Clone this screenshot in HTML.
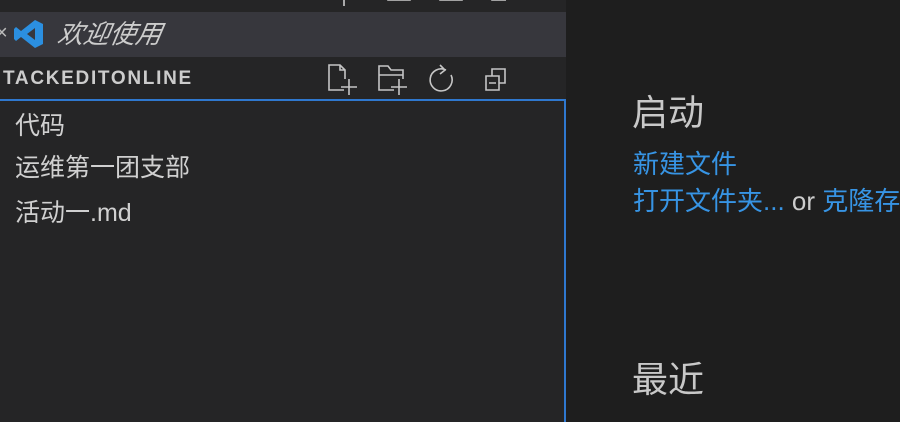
<!DOCTYPE html>
<html><head><meta charset="utf-8"><style>
body{margin:0;width:900px;height:422px;overflow:hidden;background:#1e1e1e;font-family:"Liberation Sans","Noto Sans CJK SC",sans-serif;position:relative}
.abs{position:absolute;white-space:nowrap}
.side{left:0;top:0;width:566px;height:422px;background:#252526}
.top{left:0;top:0;width:566px;height:12px;background:#252526}
.tab{left:0;top:12px;width:566px;height:45px;background:#37373d}
.list{left:-2px;top:99px;width:568px;height:323px;border:2px solid #2f78cf;box-sizing:border-box;border-bottom:none}
.item{position:absolute;left:15px;color:#d0d0d0;font-size:25px;line-height:30px;white-space:nowrap}
.clip{position:absolute;left:0;top:0;width:900px;height:422px;overflow:hidden}
svg{position:absolute}
</style></head><body>
<div class="clip">
<div class="abs side"></div>
<div class="abs top">
<svg style="left:328px;top:-8px" width="200" height="16" fill="none" stroke="#ccc" stroke-width="1.6"><path d="M2 0v6h20M16 0v14"/><path d="M60 2v6h22v-6"/><path d="M112 2v6h22v-6"/><path d="M164 2v6h14"/></svg>
</div>
<div class="abs tab">
<div class="abs" style="left:-4px;top:10px;color:#bbb;font-size:20px">×</div>
<svg style="left:13px;top:5px" width="32" height="34" viewBox="0 0 32 30"><path d="M22 1 L30 5 V25 L22 29 L8 18 L3 22 L1 20 V10 L3 8 L8 12 Z M22 9 L14 15 L22 21Z" fill="#2b8fe0" fill-rule="evenodd"/></svg>
<div class="abs" style="left:58px;top:7px;color:#ccc;font-size:26px;line-height:30px;font-style:italic;transform:skewX(-10deg)">欢迎使用</div>
</div>
<div class="abs" style="left:3px;top:68px;color:#ccc;font-size:19px;line-height:22px;font-weight:bold;letter-spacing:1.7px">TACKEDITONLINE</div>
<svg style="left:326px;top:62px" width="240" height="36" fill="none" stroke="#c5c5c5" stroke-width="1.6">
<path d="M18 28H3V3h11l5 5v9M14 3v5h5M15 25h16M23 17v16"/>
<path d="M68 28H53V4h9l3 4h12v9M53 13h24M65 25h16M73 17v16"/>
<path d="M120 8a11 11 0 1 0 5 5M114 3l5 5-5 4"/>
<path d="M160 14h13v14h-13zM166 14V7h13v14h-6M163 21h7"/>
</svg>
<div class="abs list"></div>
<div class="item" style="top:111px">代码</div>
<div class="item" style="top:153px">运维第一团支部</div>
<div class="item" style="top:198px">活动一.md</div>
<div class="abs" style="left:632px;top:91px;color:#c8c8c8;font-size:36px;line-height:44px">启动</div>
<div class="abs" style="left:633px;top:149px;color:#3794e4;font-size:26px;line-height:30px">新建文件</div>
<div class="abs" style="left:633px;top:186px;width:267px;overflow:hidden;color:#3794e4;font-size:26px;line-height:30px">打开文件夹... <span style="color:#ccc">or</span> 克隆存储库</div>
<div class="abs" style="left:632px;top:358px;color:#c8c8c8;font-size:36px;line-height:44px">最近</div>
</div>
</body></html>
